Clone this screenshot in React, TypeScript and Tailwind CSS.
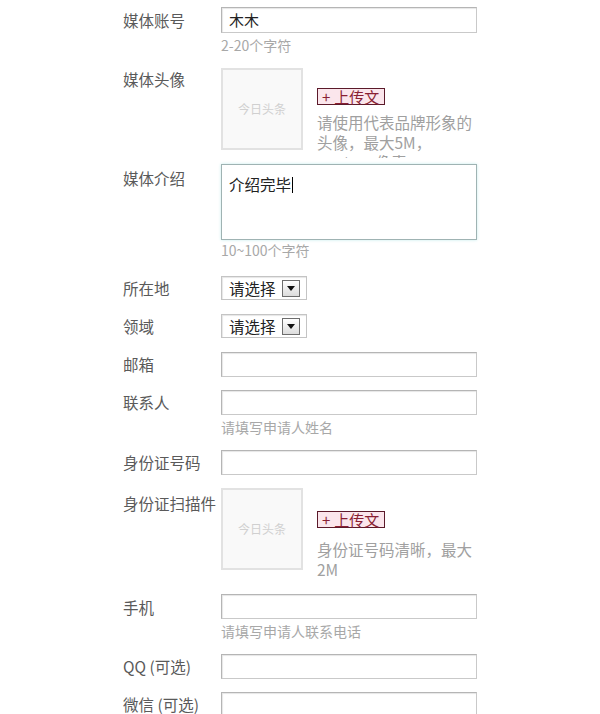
const FONT = "font-['Microsoft_YaHei','Noto_Sans_CJK_SC','Noto_Sans',sans-serif]";

function Label({ text, className = "" }: { text: string; className?: string }) {
  return (
    <div className={"w-[98px] shrink-0 whitespace-nowrap text-[15.5px] text-[#5a5a5a] " + className}>
      {text}
    </div>
  );
}

function TextInput({ value, h = "h-[25px]" }: { value?: string; h?: string }) {
  return (
    <div
      className={
        "w-[256px] border border-[#c9c9c9] border-t-[#b5b5b5] border-l-[#b5b5b5] bg-white pl-[7px] text-[15px] leading-[23px] text-[#222] shadow-[inset_1px_1px_1px_#e6e6e6] " +
        h
      }
    >
      {value}
    </div>
  );
}

function Hint({ text, className = "" }: { text: string; className?: string }) {
  return <div className={"text-[14px] leading-[20px] text-[#a8a8a8] " + className}>{text}</div>;
}

function Select() {
  return (
    <div className="flex h-[24px] w-[86px] items-center border border-[#c4c4c4] bg-white pl-[7px] shadow-[inset_1px_1px_1px_#e6e6e6]">
      <span className="text-[15.5px] leading-[20px] text-[#222]">请选择</span>
      <span className="ml-[6px] flex h-[17px] w-[18px] items-center justify-center border border-[#6d6d6d] bg-gradient-to-b from-white to-[#dcdcdc]">
        <svg width="8" height="5" viewBox="0 0 8 5">
          <path d="M0 0h8L4 5z" fill="#111" />
        </svg>
      </span>
    </div>
  );
}

function Upload() {
  return (
    <div className="flex h-[17px] w-[68px] items-center whitespace-nowrap border border-[#5b1a2a] bg-[#fbe6ec] pl-[4px] text-[15px] leading-[15px] text-[#8a1f33]">
      <span className="mr-[4px]">+</span>上传文
    </div>
  );
}

function Placeholder() {
  return (
    <div className="flex h-[82px] w-[82px] shrink-0 items-center justify-center border-2 border-[#e2e2e2] bg-[#f9f9f9] text-[12px] text-[#d0d0d0]">
      今日头条
    </div>
  );
}

export default function App() {
  return (
    <div className={"h-[714px] w-[600px] overflow-hidden bg-white pl-[123px] " + FONT}>
      <div className="mt-[7px] flex">
        <Label text="媒体账号" className="leading-[26px]" />
        <div>
          <TextInput value="木木" h="h-[26px]" />
          <Hint text="2-20个字符" className="mt-[2px]" />
        </div>
      </div>

      <div className="mt-[13px] flex">
        <Label text="媒体头像" className="leading-[22px]" />
        <div className="flex h-[90px] overflow-hidden">
          <Placeholder />
          <div className="ml-[14px] w-[162px] pt-[20px]">
            <Upload />
            <div className="mt-[7px] text-[15.5px] leading-[20px] text-[#a0a0a0]">
              请使用代表品牌形象的头像，最大5M，200*200像素
            </div>
          </div>
        </div>
      </div>

      <div className="mt-[6px] flex">
        <Label text="媒体介绍" className="pt-[3px] leading-[22px]" />
        <div>
          <div className="h-[76px] w-[256px] border border-[#9fb3b3] bg-white pl-[7px] pt-[7px] shadow-[0_0_3px_#c6ecec]">
            <span className="text-[15.5px] leading-[20px] text-[#222]">介绍完毕</span>
            <span className="ml-px inline-block h-[16px] w-px bg-black align-[-2px]" />
          </div>
          <Hint text="10~100个字符" />
        </div>
      </div>

      <div className="mt-[16px] flex items-center">
        <Label text="所在地" className="leading-[24px]" />
        <Select />
      </div>

      <div className="mt-[14px] flex items-center">
        <Label text="领域" className="leading-[24px]" />
        <Select />
      </div>

      <div className="mt-[14px] flex">
        <Label text="邮箱" className="leading-[25px]" />
        <TextInput />
      </div>

      <div className="mt-[13px] flex">
        <Label text="联系人" className="leading-[25px]" />
        <div>
          <TextInput />
          <Hint text="请填写申请人姓名" className="mt-[2px]" />
        </div>
      </div>

      <div className="mt-[13px] flex">
        <Label text="身份证号码" className="leading-[25px]" />
        <TextInput />
      </div>

      <div className="mt-[13px] flex">
        <Label text="身份证扫描件" className="pt-[4px] leading-[22px]" />
        <div className="flex">
          <Placeholder />
          <div className="ml-[14px] w-[162px] pt-[23px]">
            <Upload />
            <div className="mt-[11px] text-[15.5px] leading-[20px] text-[#a0a0a0]">
              身份证号码清晰，最大2M
            </div>
          </div>
        </div>
      </div>

      <div className="mt-[15px] flex">
        <Label text="手机" className="pt-[1px] leading-[25px]" />
        <div>
          <TextInput />
          <Hint text="请填写申请人联系电话" className="mt-[2px]" />
        </div>
      </div>

      <div className="mt-[13px] flex">
        <Label text="QQ (可选)" className="leading-[25px]" />
        <TextInput />
      </div>

      <div className="mt-[13px] flex">
        <Label text="微信 (可选)" className="leading-[25px]" />
        <TextInput />
      </div>
    </div>
  );
}
